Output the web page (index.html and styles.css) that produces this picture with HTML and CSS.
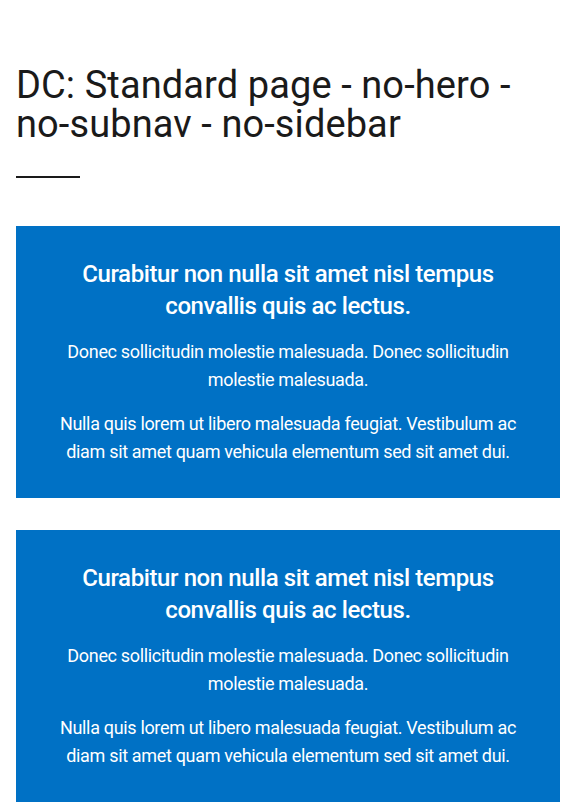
FILE: index.html
```html
<!DOCTYPE html>
<html lang="en">
<head>
<meta charset="utf-8">
<title>DC: Standard page</title>
<link rel="stylesheet" href="styles.css">
</head>
<body>
<main class="page">
  <header class="page-header">
    <h1 class="page-title">DC: Standard page - no-hero - no-subnav - no-sidebar</h1>
    <div class="title-rule"></div>
  </header>
  <section class="callout">
    <h2 class="callout-title">Curabitur non nulla sit amet nisl tempus convallis quis ac lectus.</h2>
    <p class="callout-text">Donec sollicitudin molestie malesuada. Donec sollicitudin molestie malesuada.</p>
    <p class="callout-text">Nulla quis lorem ut libero malesuada feugiat. Vestibulum ac diam sit amet quam vehicula elementum sed sit amet dui.</p>
  </section>
  <section class="callout">
    <h2 class="callout-title">Curabitur non nulla sit amet nisl tempus convallis quis ac lectus.</h2>
    <p class="callout-text">Donec sollicitudin molestie malesuada. Donec sollicitudin molestie malesuada.</p>
    <p class="callout-text">Nulla quis lorem ut libero malesuada feugiat. Vestibulum ac diam sit amet quam vehicula elementum sed sit amet dui.</p>
  </section>
</main>
</body>
</html>
```

FILE: styles.css
```css
html, body {
  margin: 0;
  padding: 0;
  background: #ffffff;
}
body {
  font-family: Roboto, "Liberation Sans", Arial, sans-serif;
  color: #1a1a1a;
}
.page {
  padding: 66px 16px 0;
}
.page-header {
  margin-bottom: 48px;
}
.page-title {
  margin: 0;
  font-size: 38px;
  font-weight: 400;
  line-height: 39px;
  letter-spacing: 0.1px;
  color: #1a1a1a;
}
.title-rule {
  margin-top: 32px;
  width: 64px;
  height: 2px;
  background: #1a1a1a;
}
.callout {
  background: #0071c5;
  color: #ffffff;
  padding: 32px 40px;
  text-align: center;
  margin-bottom: 32px;
}
.callout-title {
  margin: 0 0 16px;
  font-size: 24px;
  font-weight: 500;
  line-height: 32px;
  letter-spacing: -0.4px;
}
.callout-text {
  margin: 0 0 16px;
  font-size: 18px;
  line-height: 28px;
  letter-spacing: -0.33px;
}
.callout-text:last-child {
  margin-bottom: 0;
}
```
